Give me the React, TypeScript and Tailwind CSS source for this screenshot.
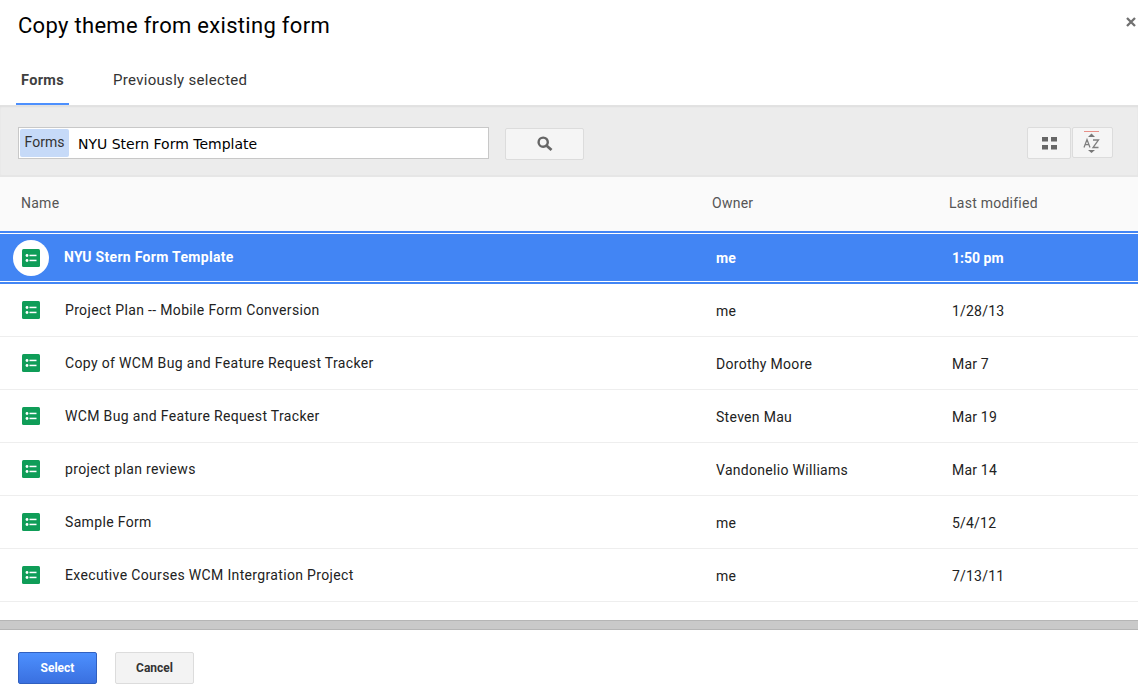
import React from "react";

function FormIcon() {
  return (
    <svg width="18" height="18" viewBox="0 0 18 18" className="shrink-0 block">
      <rect width="18" height="18" rx="1.5" fill="#0f9d58" />
      <circle cx="5" cy="6.5" r="1.4" fill="#fff" />
      <circle cx="5" cy="11.5" r="1.4" fill="#fff" />
      <rect x="7.5" y="5.7" width="7" height="1.5" fill="#fff" />
      <rect x="7.5" y="10.7" width="7" height="1.5" fill="#fff" />
    </svg>
  );
}

const rows = [
  ["Project Plan -- Mobile Form Conversion", "me", "1/28/13"],
  ["Copy of WCM Bug and Feature Request Tracker", "Dorothy Moore", "Mar 7"],
  ["WCM Bug and Feature Request Tracker", "Steven Mau", "Mar 19"],
  ["project plan reviews", "Vandonelio Williams", "Mar 14"],
  ["Sample Form", "me", "5/4/12"],
  ["Executive Courses WCM Intergration Project", "me", "7/13/11"],
];

export default function App() {
  return (
    <div className="w-[1138px] h-[690px] overflow-hidden bg-white flex flex-col font-['Roboto',sans-serif] text-[14px] text-[#222]">
      <header className="h-[105px] shrink-0 relative pl-[18px]">
        <h1 className="pt-[12px] text-[22px] leading-[28px] font-normal text-black tracking-[0.3px]">Copy theme from existing form</h1>
        <svg width="10" height="10" viewBox="0 0 10 10" className="absolute right-[2px] top-[17px]">
          <path d="M1 1 L9 9 M9 1 L1 9" stroke="#707070" strokeWidth="2.3" />
        </svg>
        <nav className="flex mt-[24px] -ml-[2px] h-[41px]">
          <div className="w-[53px] h-[41px] border-b-[2px] border-[#4d90fe] text-center font-bold text-[#404040] leading-[33px] text-[14.5px] tracking-[0.3px]">Forms</div>
          <div className="ml-[44px] leading-[33px] text-[#333] text-[15px] tracking-[0.3px]">Previously selected</div>
        </nav>
      </header>

      <section className="h-[72px] shrink-0 bg-[#ececec] border-t border-[#e2e2e2] border-b-2 border-b-[#e6e6e6] shadow-[inset_0_1px_2px_rgba(0,0,0,0.06)] flex items-start pt-[21px] pl-[18px] pr-[25px]">
        <div className="w-[471px] h-[32px] bg-white border border-[#c8c8c8] flex items-center pl-px">
          <span className="w-[49px] h-[28px] bg-[#c6daf8] rounded-[2px] text-center text-[14px] leading-[26px] text-[#333]">Forms</span>
          <span className="ml-[9px] pt-[2px] font-['DejaVu_Sans',sans-serif] text-[14px] text-black">NYU Stern Form Template</span>
        </div>
        <button className="ml-[16px] mt-px w-[79px] h-[32px] bg-[#f5f5f5] border border-[#dcdcdc] rounded-[2px] flex items-center justify-center">
          <svg width="16" height="16" viewBox="0 0 16 16">
            <circle cx="6.2" cy="6.2" r="4.6" fill="none" stroke="#666" strokeWidth="2.4" />
            <path d="M9.7 9.7 L14.5 14" stroke="#666" strokeWidth="2.8" />
          </svg>
        </button>
        <div className="ml-auto flex items-start gap-px">
          <button className="w-[44px] h-[32px] bg-[#f5f5f5] border border-[#dcdcdc] rounded-[2px] flex items-center justify-center">
            <svg width="15" height="13" viewBox="0 0 15 13">
              <path d="M0 0h6v4.5H0zM9 0H15v4.5H9zM0 8h6v4.5H0zM9 8H15v4.5H9z" fill="#666" />
            </svg>
          </button>
          <button className="w-[41px] h-[31px] bg-[#f5f5f5] border border-[#dcdcdc] rounded-[2px] flex items-center justify-center">
            <svg width="17" height="23" viewBox="0 0 17 23" className="-ml-[3px]">
              <path d="M1 0.5H16" stroke="#e89088" strokeWidth="1" />
              <path d="M8.5 2.5L12 6H5z" fill="#777" />
              <path d="M5 19h7l-3.5 3z" fill="#777" />
              <path d="M1 16.5L4 8.5L7 16.5M2.1 13.7H5.9M10 9H15.5L10 16.5H15.5" fill="none" stroke="#808080" strokeWidth="1.3" />
            </svg>
          </button>
        </div>
      </section>

      <div className="h-[54px] shrink-0 bg-[#fafafa] flex items-center text-[#555] text-[14px] leading-none tracking-[0.25px] pb-[2px]">
        <div className="w-[711px] pl-[21px]">Name</div>
        <div className="w-[237px] pl-px">Owner</div>
        <div className="pl-px">Last modified</div>
      </div>

      <div className="h-[53px] shrink-0 border-y-[2px] border-[#4285f4] bg-[#4285f4] relative">
        <div className="h-full border-y border-white flex items-center text-white font-bold">
          <div className="w-[64px] pl-[13px] shrink-0">
            <div className="w-[36px] h-[36px] rounded-full bg-white flex items-center justify-center">
              <FormIcon />
            </div>
          </div>
          <div className="w-[652px] tracking-[0.3px]">NYU Stern Form Template</div>
          <div className="w-[236px] mt-[2px]">me</div>
          <div className="mt-[2px]">1:50 pm</div>
        </div>
      </div>

      {rows.map((r) => (
        <div key={r[0]} className="h-[53px] shrink-0 border-b border-[#eeeeee] flex items-center text-[#222] pt-[3px]">
          <div className="w-[65px] pl-[22px] shrink-0 -mt-[4px]"><FormIcon /></div>
          <div className="w-[651px] -mt-[2px] tracking-[0.34px]">{r[0]}</div>
          <div className="w-[236px] tracking-[0.3px]">{r[1]}</div>
          <div className="tracking-[0.2px]">{r[2]}</div>
        </div>
      ))}

      <div className="flex-1 min-h-0"></div>
      <div className="h-[10px] shrink-0 bg-[#c9c9c9] border-t border-b border-[#b5b5b5]"></div>
      <footer className="h-[60px] shrink-0 flex items-start pt-[22px] pl-[18px] gap-[18px]">
        <button className="w-[79px] h-[32px] rounded-[2px] border border-[#3060c0] bg-gradient-to-b from-[#4d90fe] to-[#3a70e0] text-white text-[12px] font-bold">Select</button>
        <button className="w-[79px] h-[32px] rounded-[2px] border border-[#dcdcdc] bg-[#f3f3f3] text-[#333] text-[12px] font-bold">Cancel</button>
      </footer>
    </div>
  );
}
